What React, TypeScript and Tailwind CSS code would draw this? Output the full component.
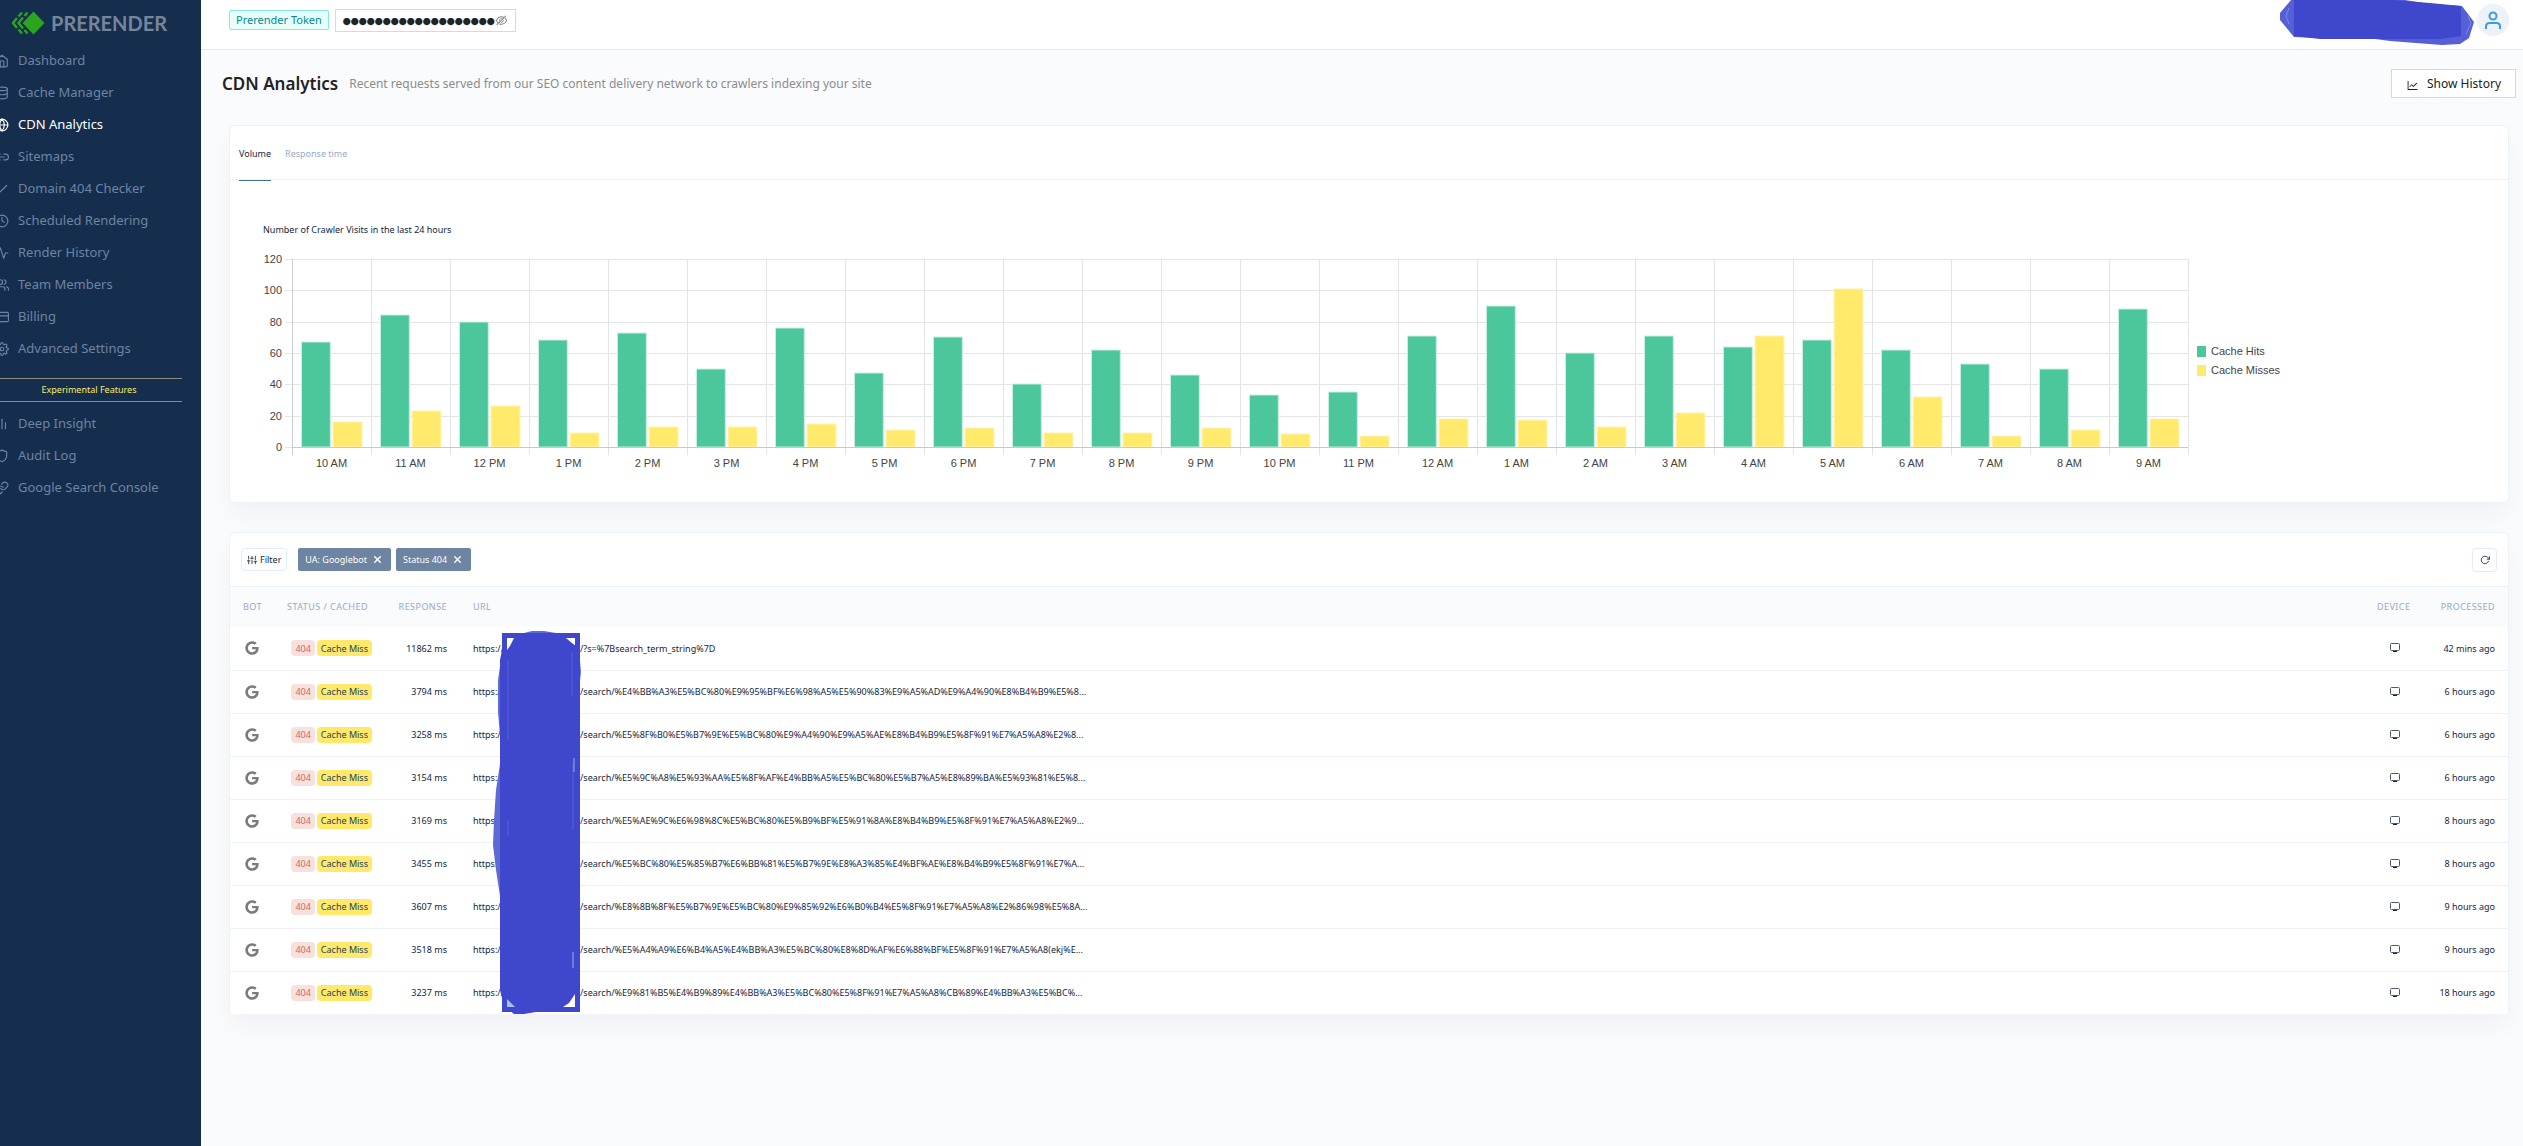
import React from "react";
import type { IconType } from "react-icons";
import {
  FiActivity,
  FiBarChart2,
  FiCheck,
  FiClock,
  FiCreditCard,
  FiDatabase,
  FiGlobe,
  FiHome,
  FiLink,
  FiLink2,
  FiRotateCw,
  FiSettings,
  FiShield,
  FiSliders,
  FiUsers,
  FiX,
} from "react-icons/fi";
import { AiOutlineEyeInvisible, AiOutlineLineChart } from "react-icons/ai";
import { FaGoogle } from "react-icons/fa";

type NavEntry = { label: string; icon: IconType; active?: boolean };

const MAIN_NAV: NavEntry[] = [
  { label: "Dashboard", icon: FiHome },
  { label: "Cache Manager", icon: FiDatabase },
  { label: "CDN Analytics", icon: FiGlobe, active: true },
  { label: "Sitemaps", icon: FiLink2 },
  { label: "Domain 404 Checker", icon: FiCheck },
  { label: "Scheduled Rendering", icon: FiClock },
  { label: "Render History", icon: FiActivity },
  { label: "Team Members", icon: FiUsers },
  { label: "Billing", icon: FiCreditCard },
  { label: "Advanced Settings", icon: FiSettings },
];

const EXTRA_NAV: NavEntry[] = [
  { label: "Deep Insight", icon: FiBarChart2 },
  { label: "Audit Log", icon: FiShield },
  { label: "Google Search Console", icon: FiLink },
];

const VISITS: [string, number, number][] = [
  ["10 AM", 67, 16],
  ["11 AM", 84, 23],
  ["12 PM", 80, 26],
  ["1 PM", 68, 9],
  ["2 PM", 73, 13],
  ["3 PM", 50, 13],
  ["4 PM", 76, 15],
  ["5 PM", 47, 11],
  ["6 PM", 70, 12],
  ["7 PM", 40, 9],
  ["8 PM", 62, 9],
  ["9 PM", 46, 12],
  ["10 PM", 33, 8],
  ["11 PM", 35, 7],
  ["12 AM", 71, 18],
  ["1 AM", 90, 17],
  ["2 AM", 60, 13],
  ["3 AM", 71, 22],
  ["4 AM", 64, 71],
  ["5 AM", 68, 101],
  ["6 AM", 62, 32],
  ["7 AM", 53, 7],
  ["8 AM", 50, 11],
  ["9 AM", 88, 18],
];

const REQUESTS: { ms: number; path: string; ago: string }[] = [
  { ms: 11862, path: "/?s=%7Bsearch_term_string%7D", ago: "42 mins ago" },
  { ms: 3794, path: "/search/%E4%BB%A3%E5%BC%80%E9%95%BF%E6%98%A5%E5%90%83%E9%A5%AD%E9%A4%90%E8%B4%B9%E5%8...", ago: "6 hours ago" },
  { ms: 3258, path: "/search/%E5%8F%B0%E5%B7%9E%E5%BC%80%E9%A4%90%E9%A5%AE%E8%B4%B9%E5%8F%91%E7%A5%A8%E2%8...", ago: "6 hours ago" },
  { ms: 3154, path: "/search/%E5%9C%A8%E5%93%AA%E5%8F%AF%E4%BB%A5%E5%BC%80%E5%B7%A5%E8%89%BA%E5%93%81%E5%8...", ago: "6 hours ago" },
  { ms: 3169, path: "/search/%E5%AE%9C%E6%98%8C%E5%BC%80%E5%B9%BF%E5%91%8A%E8%B4%B9%E5%8F%91%E7%A5%A8%E2%9...", ago: "8 hours ago" },
  { ms: 3455, path: "/search/%E5%BC%80%E5%85%B7%E6%BB%81%E5%B7%9E%E8%A3%85%E4%BF%AE%E8%B4%B9%E5%8F%91%E7%A...", ago: "8 hours ago" },
  { ms: 3607, path: "/search/%E8%8B%8F%E5%B7%9E%E5%BC%80%E9%85%92%E6%B0%B4%E5%8F%91%E7%A5%A8%E2%86%98%E5%8A...", ago: "9 hours ago" },
  { ms: 3518, path: "/search/%E5%A4%A9%E6%B4%A5%E4%BB%A3%E5%BC%80%E8%8D%AF%E6%88%BF%E5%8F%91%E7%A5%A8(ekj%E...", ago: "9 hours ago" },
  { ms: 3237, path: "/search/%E9%81%B5%E4%B9%89%E4%BB%A3%E5%BC%80%E5%8F%91%E7%A5%A8%CB%89%E4%BB%A3%E5%BC%...", ago: "18 hours ago" },
];

function Logo() {
  return (
    <svg width="33" height="24" viewBox="0 0 33 24" fill="none" aria-hidden="true">
      <path d="M21.500 0.500 32.500 12 21.500 23.500 10.500 12Z" fill="#2ba51e" />
      <g stroke="#2ba51e" strokeWidth="2.400">
        <path d="M10 1.500 6.500 5.500M5 7 1 12 5 17M6.500 18.500 10 22.500" />
        <path d="M15.500 1.500 12.500 5M11 6.500 6.500 12 11 17.500M12.500 19 15.500 22.500" />
      </g>
    </svg>
  );
}

function NavList({ items }: { items: NavEntry[] }) {
  return (
    <ul>
      {items.map(({ label, icon: Icon, active }) => (
        <li key={label}>
          <a
            href="#"
            className={
              active
                ? "-ml-[5px] flex h-8 items-center gap-[9px] text-white"
                : "-ml-[5px] flex h-8 items-center gap-[9px] text-[#6e84a3]"
            }
          >
            <Icon size={14} className="shrink-0" />
            {label}
          </a>
        </li>
      ))}
    </ul>
  );
}

function Sidebar() {
  return (
    <aside className="w-[201px] shrink-0 overflow-hidden bg-[#152e4d] text-[13px]">
      <a href="#" className="flex h-[45px] items-center gap-[6px] pl-[12px] font-['Lato',sans-serif] text-[20px] font-bold text-[#76859a]">
        <Logo />
        PRERENDER
      </a>
      <nav>
        <NavList items={MAIN_NAV} />
        <div className="mt-[13px] mr-[19px] mb-[6px] -ml-1 flex h-6 items-center justify-center border-y border-[#8a8c7c] text-[9px] text-[#ffe96b]">
          Experimental Features
        </div>
        <NavList items={EXTRA_NAV} />
      </nav>
    </aside>
  );
}

function AccountScribble() {
  return (
    <svg width="195" height="46" viewBox="0 0 195 46" className="mr-[2px] self-start" aria-hidden="true">
      <path d="M11 0H125L150 4L182 6L194 22L189 38L180 44L162 45L110 41L95 39L40 38L14 37L0 20V13Z" fill="#5560d6" />
      <path d="M14 0H112L150 3L181 6V36L160 39H40L14 36Z" fill="#3f48cc" />
      <path d="M9 8 6 16 9 24M188 16 191 23 186 34" stroke="#7f88e4" fill="none" />
    </svg>
  );
}

function TopBar() {
  return (
    <header className="flex h-[50px] items-center border-b border-[#e3e8ef] bg-white pr-[14px] pb-[9px] pl-7">
      <label
        htmlFor="token"
        className="flex h-5 items-center rounded-[2px] border border-[#87e8de] bg-[#e6fffb] px-[6px] text-[11px] text-[#08878f]"
      >
        Prerender Token
      </label>
      <div className="ml-[6px] flex h-[23px] w-[181px] items-center border border-[#d9d9d9] bg-white pr-[7px] pl-[7px]">
        <input
          id="token"
          readOnly
          value="●●●●●●●●●●●●●●●●●●●"
          className="min-w-0 flex-1 pt-1 font-['Noto_Sans_CJK_SC',sans-serif] text-[8px] leading-[12px] text-[#222] outline-none"
        />
        <button type="button" aria-label="Show token" className="text-[#7d7d7d]">
          <AiOutlineEyeInvisible size={13} />
        </button>
      </div>
      <div className="ml-auto flex items-center self-stretch">
        <AccountScribble />
        <button type="button" aria-label="Account" className="flex size-8 items-center justify-center rounded-full bg-[#edf2f9]">
          <svg width="16" height="18" viewBox="0 0 16 18" fill="none" stroke="#3c9be8" strokeWidth="2" aria-hidden="true">
            <circle cx="8" cy="5" r="3.500" />
            <path d="M1 18V15.500C1 13 2.500 12 4.500 12H11.500C13.500 12 15 13 15 15.500V18" />
          </svg>
        </button>
      </div>
    </header>
  );
}

const PLOT_H = 188;
const MAX = 120;
const SLOT = 100 / VISITS.length;
const toY = (v: number) => Math.round(PLOT_H - (v / MAX) * PLOT_H);

function VisitsChart() {
  return (
    <svg
      className="h-[204px] min-w-0 flex-1 overflow-visible font-['Liberation_Sans',Arial,sans-serif] text-[11px]"
      role="img"
      aria-label="Crawler visits by hour"
    >
      <g shapeRendering="crispEdges">
        {[0, 20, 40, 60, 80, 100, 120].map((v) => (
          <React.Fragment key={v}>
            <rect x="-7" y={toY(v)} width="7" height="1" fill="#e5e5e5" />
            <rect x="0" y={toY(v)} width="100%" height="1" fill={v === 0 ? "#c9c9c9" : "#e5e5e5"} />
          </React.Fragment>
        ))}
        {Array.from({ length: VISITS.length + 1 }, (_, i) => (
          <rect key={i} x={`${i * SLOT}%`} y="0" width="1" height={PLOT_H + 8} fill={i === 0 ? "#cccccc" : "#e5e5e5"} />
        ))}
      </g>
      {VISITS.map(([label, hits, misses], i) => (
        <React.Fragment key={label}>
          <rect x={`${(i + 0.12) * SLOT}%`} y={toY(hits)} width={`${SLOT * 0.365}%`} height={PLOT_H - toY(hits)} fill="#4bc79b" stroke="#c9efe1" />
          <rect x={`${(i + 0.52) * SLOT}%`} y={toY(misses)} width={`${SLOT * 0.365}%`} height={PLOT_H - toY(misses)} fill="#ffea6b" stroke="#fff3ad" />
          <text x={`${(i + 0.5) * SLOT}%`} y="208" textAnchor="middle" fill="#444">
            {label}
          </text>
        </React.Fragment>
      ))}
      <rect x="0" y={PLOT_H} width="100%" height="1" fill="#c9c9c9" shapeRendering="crispEdges" />
      {[0, 20, 40, 60, 80, 100, 120].map((v) => (
        <text key={v} x="-10" y={toY(v) + 4} textAnchor="end" fill="#444">
          {v}
        </text>
      ))}
    </svg>
  );
}

function ChartCard() {
  return (
    <section className="rounded-md border border-[#edf2f9] bg-white shadow-[0_12px_24px_rgba(18,38,63,0.04)]">
      <div role="tablist" className="flex h-[54px] gap-[14px] border-b border-[#edf2f9] px-[9px] text-[9px]">
        <button type="button" role="tab" aria-selected="true" className="-mb-[2px] border-b border-[#3f6f92] pt-px text-[#12263f]">
          Volume
        </button>
        <button type="button" role="tab" aria-selected="false" className="-mb-[2px] border-b border-transparent pt-px text-[#95aac9]">
          Response time
        </button>
      </div>
      <div className="pt-[43px] pb-[39px]">
        <h2 className="pl-[33px] text-[9px] leading-[14px] text-[#12263f]">Number of Crawler Visits in the last 24 hours</h2>
        <div className="mt-[22px] flex items-center pl-[62px]">
          <VisitsChart />
          <ul className="w-[320px] pl-[9px] font-['Liberation_Sans',Arial,sans-serif] text-[11px] text-[#444]">
            <li className="flex h-[19px] items-center gap-[5px]">
              <span className="h-[11px] w-[9px] bg-[#4bc79b]" />
              Cache Hits
            </li>
            <li className="flex h-[19px] items-center gap-[5px]">
              <span className="h-[11px] w-[9px] bg-[#ffea6b]" />
              Cache Misses
            </li>
          </ul>
        </div>
      </div>
    </section>
  );
}

function FilterChip({ children }: { children: string }) {
  return (
    <span className="flex h-[23px] items-center gap-[5px] rounded-[2px] bg-[#6e84a3] pr-2 pl-[7px] text-[9px] text-white">
      {children}
      <button type="button" aria-label={`Remove ${children}`}>
        <FiX size={11} strokeWidth={3} />
      </button>
    </span>
  );
}

function UrlScribble() {
  return (
    <svg width="90" height="386" viewBox="0 0 90 386" fill="none" className="absolute top-[43px] left-[262px]" aria-hidden="true">
      <path
        d="M9 30 6 50V82L8 106V134L4 160 2 190 1 215 4 240 8 266V300H87V180L87 110V86H88V60H87L89 42 87 20 70 4 52 1H40L24 5Z"
        fill="#5f6bd4"
      />
      <path d="M10 20 22 6 38 3H54L70 6 84 16V366L74 378 50 381 32 384H22L12 376 8 360V30Z" fill="#3f48cc" />
      <path d="M12.500 5.500H85.500V379.500H12.500Z" stroke="#3f48cc" strokeWidth="5" />
      <path d="M15 8H22L18 16 15 20ZM77 8H83V13ZM83 364V377H71L77 373Z" fill="#fff" />
      <path d="M15 369V377H23Z" fill="#a9c1ea" />
      <path d="M16 30V110M80 22V66M16 190V206M81 132V200" stroke="#5560d6" />
      <path d="M82 128V142M81 322V338" stroke="#9fa6ea" />
    </svg>
  );
}

function MonitorIcon() {
  return (
    <svg width="10" height="10" viewBox="0 0 10 10" fill="none" className="mx-auto" role="img" aria-label="Desktop">
      <rect x="0.500" y="0.500" width="9" height="7" rx="1" stroke="#4b5a70" />
      <path d="M3 8.500H7" stroke="#12263f" />
    </svg>
  );
}

function RequestsTable() {
  return (
    <div className="relative">
      <table className="w-full table-fixed border-collapse text-[9px] text-[#12263f]">
        <colgroup>
          <col className="w-[44px]" />
          <col className="w-[111px]" />
          <col className="w-[75px]" />
          <col />
          <col className="w-[61px]" />
          <col className="w-[83px]" />
        </colgroup>
        <thead>
          <tr className="h-10 bg-[#f9fbfd] tracking-wider whitespace-nowrap text-[#95aac9]">
            <th scope="col" className="px-[13px] text-left font-normal">BOT</th>
            <th scope="col" className="px-[13px] text-left font-normal">STATUS / CACHED</th>
            <th scope="col" className="px-[13px] text-right font-normal">RESPONSE</th>
            <th scope="col" className="px-[13px] text-left font-normal">URL</th>
            <th scope="col" className="px-[13px] text-left font-normal">DEVICE</th>
            <th scope="col" className="px-[13px] text-right font-normal">PROCESSED</th>
          </tr>
        </thead>
        <tbody>
          {REQUESTS.map((r) => (
            <tr key={r.path} className="h-[43px] border-b border-[#edf2f9] whitespace-nowrap last:border-b-0">
              <td className="px-[15px]">
                <FaGoogle size={14} color="#7b7b7b" title="Googlebot" />
              </td>
              <td className="px-[13px]">
                <span className="flex justify-end gap-[2px]">
                  <span className="flex h-4 items-center rounded-[4px] bg-[#f8e0dd] px-1 text-[#cf6a5d]">404</span>
                  <span className="flex h-4 items-center rounded-[4px] bg-[#ffe96b] px-1 text-[#283e59]">Cache Miss</span>
                </span>
              </td>
              <td className="px-[13px] text-right">{r.ms} ms</td>
              <td className="px-[13px]">
                <span className="flex">
                  <span className="w-[107px] shrink-0">https://</span>
                  <span>{r.path}</span>
                </span>
              </td>
              <td className="px-[13px]">
                <MonitorIcon />
              </td>
              <td className="px-[13px] text-right">{r.ago}</td>
            </tr>
          ))}
        </tbody>
      </table>
      <UrlScribble />
    </div>
  );
}

function RequestsCard() {
  return (
    <section className="mt-[29px] rounded-t-md border border-b-0 border-[#edf2f9] bg-white shadow-[0_12px_24px_rgba(18,38,63,0.04)]">
      <div className="flex h-[54px] items-center border-b border-[#edf2f9] px-[11px]">
        <button type="button" className="mr-[11px] flex h-[23px] items-center gap-[3px] rounded-[4px] border border-[#e3ebf6] px-[5px] text-[9px] text-[#12263f]">
          <FiSliders size={10} />
          Filter
        </button>
        <div className="flex gap-[5px]">
          <FilterChip>UA: Googlebot</FilterChip>
          <FilterChip>Status 404</FilterChip>
        </div>
        <button type="button" aria-label="Refresh" className="ml-auto flex h-6 w-[25px] items-center justify-center rounded-[4px] border border-[#e3ebf6] text-[#12263f]">
          <FiRotateCw size={10} />
        </button>
      </div>
      <RequestsTable />
    </section>
  );
}

export default function App() {
  return (
    <div className="flex min-h-screen bg-[#f9fbfd] font-['Noto_Sans','Open_Sans',sans-serif] text-[#12263f]">
      <Sidebar />
      <div className="min-w-0 flex-1">
        <TopBar />
        <main>
          <div className="flex items-center pt-[19px] pr-[7px] pb-[27px] pl-[21px]">
            <h1 className="text-[17px] leading-6 font-semibold text-[#222]">CDN Analytics</h1>
            <p className="ml-[11px] text-[12px] text-[#8c8c8c]">
              Recent requests served from our SEO content delivery network to crawlers indexing your site
            </p>
            <button type="button" className="ml-auto flex h-[29px] items-center gap-2 border border-[#d9d9d9] bg-white px-[14px] text-[12px] text-[#222]">
              <AiOutlineLineChart size={13} className="mb-[5px] self-end" />
              Show History
            </button>
          </div>
          <div className="mr-[14px] ml-7">
            <ChartCard />
            <RequestsCard />
          </div>
        </main>
      </div>
    </div>
  );
}
